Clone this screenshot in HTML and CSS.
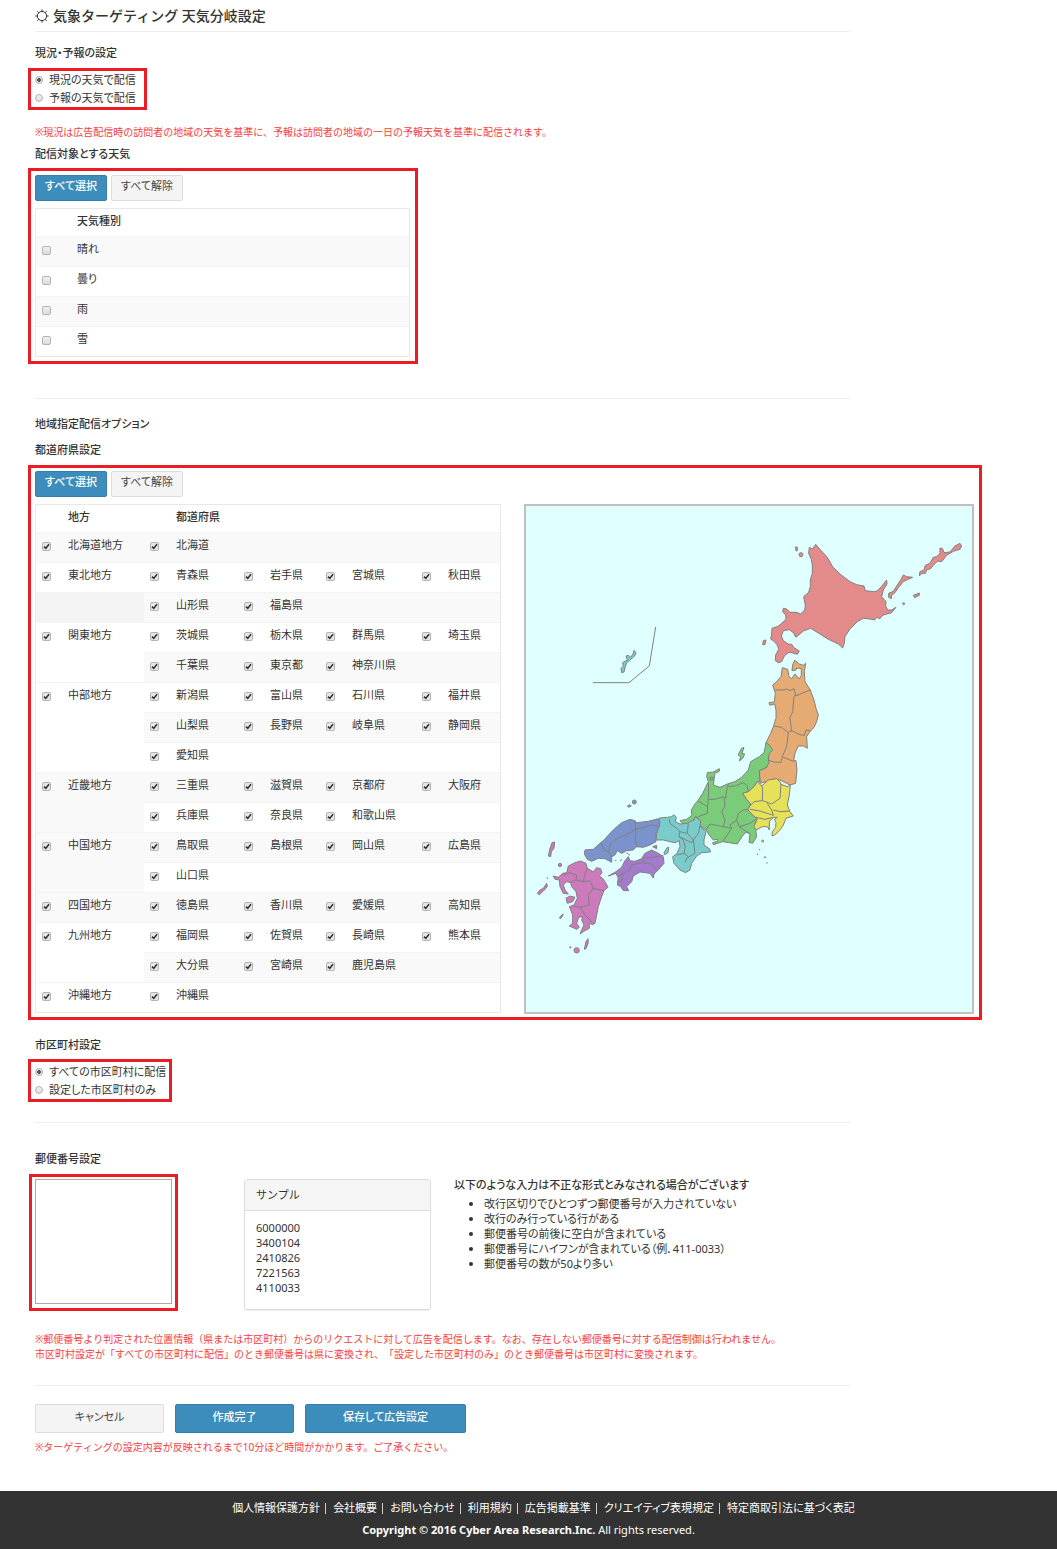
FILE: index.html
```html
<!DOCTYPE html>
<html lang="ja">
<head>
<meta charset="utf-8">
<title>気象ターゲティング 天気分岐設定</title>
<link rel="stylesheet" href="styles.css">
</head>
<body>
<main class="page">
<h1 class="title"><svg class="title-icon" viewBox="0 0 14 14" aria-hidden="true"><circle cx="7" cy="7" r="4.6"/><path d="M7 .4v2M7 11.6v2M.4 7h2M11.6 7h2M2.3 2.3l1.4 1.4M10.3 10.3l1.4 1.4M2.3 11.7l1.4-1.4M10.3 3.7l1.4-1.4"/></svg>気象ターゲティング 天気分岐設定</h1>

<h2>現況・予報の設定</h2>
<div class="frame frame-mode">
<div class="choice"><input type="radio" name="mode" id="m1" checked><label for="m1">現況の天気で配信</label></div>
<div class="choice"><input type="radio" name="mode" id="m2"><label for="m2">予報の天気で配信</label></div>
</div>
<p class="note note-mode">※現況は広告配信時の訪問者の地域の天気を基準に、予報は訪問者の地域の一日の予報天気を基準に配信されます。</p>

<h2>配信対象とする天気</h2>
<div class="frame frame-weather">
<div class="tools"><button class="btn primary" type="button">すべて選択</button><button class="btn" type="button">すべて解除</button></div>
<table class="grid">
<colgroup><col class="w33"><col></colgroup>
<thead><tr><th></th><th>天気種別</th></tr></thead>
<tbody>
<tr><td><input type="checkbox" id="w1"></td><td><label for="w1">晴れ</label></td></tr>
<tr><td><input type="checkbox" id="w2"></td><td><label for="w2">曇り</label></td></tr>
<tr><td><input type="checkbox" id="w3"></td><td><label for="w3">雨</label></td></tr>
<tr><td><input type="checkbox" id="w4"></td><td><label for="w4">雪</label></td></tr>
</tbody>
</table>
</div>

<hr class="after-weather">
<h2>地域指定配信オプション</h2>
<h2 class="sub">都道府県設定</h2>
<div class="frame frame-area">
<div class="tools"><button class="btn primary" type="button">すべて選択</button><button class="btn" type="button">すべて解除</button></div>
<div class="area">
<table class="grid regions">
<colgroup><col class="w24"><col class="w84"><col class="w24"><col class="w70"><col class="w24"><col class="w58"><col class="w24"><col class="w72"><col class="w24"><col></colgroup>
<thead><tr><th></th><th>地方</th><th></th><th colspan="7">都道府県</th></tr></thead>
<tbody>
<tr><td><input type="checkbox" id="r1" checked></td><td><label for="r1">北海道地方</label></td><td><input type="checkbox" id="p1" checked></td><td colspan="7"><label for="p1">北海道</label></td></tr>
<tr><td><input type="checkbox" id="r2" checked></td><td><label for="r2">東北地方</label></td><td><input type="checkbox" id="p2" checked></td><td><label for="p2">青森県</label></td><td><input type="checkbox" id="p3" checked></td><td><label for="p3">岩手県</label></td><td><input type="checkbox" id="p4" checked></td><td><label for="p4">宮城県</label></td><td><input type="checkbox" id="p5" checked></td><td><label for="p5">秋田県</label></td></tr>
<tr><td colspan="2" class="empty"></td><td><input type="checkbox" id="p6" checked></td><td><label for="p6">山形県</label></td><td><input type="checkbox" id="p7" checked></td><td colspan="5"><label for="p7">福島県</label></td></tr>
<tr><td rowspan="2"><input type="checkbox" id="r3" checked></td><td rowspan="2"><label for="r3">関東地方</label></td><td><input type="checkbox" id="p8" checked></td><td><label for="p8">茨城県</label></td><td><input type="checkbox" id="p9" checked></td><td><label for="p9">栃木県</label></td><td><input type="checkbox" id="p10" checked></td><td><label for="p10">群馬県</label></td><td><input type="checkbox" id="p11" checked></td><td><label for="p11">埼玉県</label></td></tr>
<tr><td><input type="checkbox" id="p12" checked></td><td><label for="p12">千葉県</label></td><td><input type="checkbox" id="p13" checked></td><td><label for="p13">東京都</label></td><td><input type="checkbox" id="p14" checked></td><td colspan="3"><label for="p14">神奈川県</label></td></tr>
<tr><td rowspan="3"><input type="checkbox" id="r4" checked></td><td rowspan="3"><label for="r4">中部地方</label></td><td><input type="checkbox" id="p15" checked></td><td><label for="p15">新潟県</label></td><td><input type="checkbox" id="p16" checked></td><td><label for="p16">富山県</label></td><td><input type="checkbox" id="p17" checked></td><td><label for="p17">石川県</label></td><td><input type="checkbox" id="p18" checked></td><td><label for="p18">福井県</label></td></tr>
<tr><td><input type="checkbox" id="p19" checked></td><td><label for="p19">山梨県</label></td><td><input type="checkbox" id="p20" checked></td><td><label for="p20">長野県</label></td><td><input type="checkbox" id="p21" checked></td><td><label for="p21">岐阜県</label></td><td><input type="checkbox" id="p22" checked></td><td><label for="p22">静岡県</label></td></tr>
<tr><td><input type="checkbox" id="p23" checked></td><td colspan="7"><label for="p23">愛知県</label></td></tr>
<tr><td rowspan="2"><input type="checkbox" id="r5" checked></td><td rowspan="2"><label for="r5">近畿地方</label></td><td><input type="checkbox" id="p24" checked></td><td><label for="p24">三重県</label></td><td><input type="checkbox" id="p25" checked></td><td><label for="p25">滋賀県</label></td><td><input type="checkbox" id="p26" checked></td><td><label for="p26">京都府</label></td><td><input type="checkbox" id="p27" checked></td><td><label for="p27">大阪府</label></td></tr>
<tr><td><input type="checkbox" id="p28" checked></td><td><label for="p28">兵庫県</label></td><td><input type="checkbox" id="p29" checked></td><td><label for="p29">奈良県</label></td><td><input type="checkbox" id="p30" checked></td><td colspan="3"><label for="p30">和歌山県</label></td></tr>
<tr><td rowspan="2"><input type="checkbox" id="r6" checked></td><td rowspan="2"><label for="r6">中国地方</label></td><td><input type="checkbox" id="p31" checked></td><td><label for="p31">鳥取県</label></td><td><input type="checkbox" id="p32" checked></td><td><label for="p32">島根県</label></td><td><input type="checkbox" id="p33" checked></td><td><label for="p33">岡山県</label></td><td><input type="checkbox" id="p34" checked></td><td><label for="p34">広島県</label></td></tr>
<tr><td><input type="checkbox" id="p35" checked></td><td colspan="7"><label for="p35">山口県</label></td></tr>
<tr><td><input type="checkbox" id="r7" checked></td><td><label for="r7">四国地方</label></td><td><input type="checkbox" id="p36" checked></td><td><label for="p36">徳島県</label></td><td><input type="checkbox" id="p37" checked></td><td><label for="p37">香川県</label></td><td><input type="checkbox" id="p38" checked></td><td><label for="p38">愛媛県</label></td><td><input type="checkbox" id="p39" checked></td><td><label for="p39">高知県</label></td></tr>
<tr><td rowspan="2"><input type="checkbox" id="r8" checked></td><td rowspan="2"><label for="r8">九州地方</label></td><td><input type="checkbox" id="p40" checked></td><td><label for="p40">福岡県</label></td><td><input type="checkbox" id="p41" checked></td><td><label for="p41">佐賀県</label></td><td><input type="checkbox" id="p42" checked></td><td><label for="p42">長崎県</label></td><td><input type="checkbox" id="p43" checked></td><td><label for="p43">熊本県</label></td></tr>
<tr><td><input type="checkbox" id="p44" checked></td><td><label for="p44">大分県</label></td><td><input type="checkbox" id="p45" checked></td><td><label for="p45">宮崎県</label></td><td><input type="checkbox" id="p46" checked></td><td colspan="3"><label for="p46">鹿児島県</label></td></tr>
<tr><td><input type="checkbox" id="r9" checked></td><td><label for="r9">沖縄地方</label></td><td><input type="checkbox" id="p47" checked></td><td colspan="7"><label for="p47">沖縄県</label></td></tr>
</tbody>
</table>
<svg class="map" viewBox="526 506 446 506" role="img" aria-label="日本地図">
<g transform="translate(740 530) scale(.3333)">
<g class="hokkaido">
<path d="M208 52L218 57 227 43 240 58 262 82 278 110 300 132 330 155 350 164 372 168 376 182 400 185 412 183 424 170 440 150 441 162 430 180 425 200 438 215 437 228 443 240 455 240 468 232 455 248 440 252 428 256 420 266 410 262 404 270 390 267 370 265 352 275 330 297 315 320 313 340 308 354 295 342 265 328 240 312 212 295 190 303 168 322 160 308 148 299 130 302 124 318 130 332 145 342 155 343 162 353 178 363 172 373 155 368 145 368 133 378 125 395 115 398 106 392 107 375 116 358 112 345 102 334 92 327 95 312 96 295 112 290 122 283 138 268 137 255 128 245 130 235 140 237 150 247 168 247 182 252 194 240 196 225 191 200 206 187 211 170 211 150 217 130 217 105 214 88 206 70Z"/>
<path d="M167 50l5 2 0 10-4 1zM70 332l8-2-3 14-7 0zM446 190L460 184 470 168 482 150 490 135 500 140 518 142 500 150 490 155 476 172 465 188 455 196 454 206 446 202ZM538 138L540 125 552 120 556 106 570 100 580 82 590 80 600 70 600 54 608 56 612 68 630 66 645 48 660 40 665 48 660 58 640 64 620 76 606 94 592 94 580 106 572 116 560 120 556 130 546 130ZM520 196L538 189 538 196 524 203Z"/>
<circle cx="183" cy="74" r="6"/><circle cx="491" cy="221" r="3"/>
</g>
<g class="tohoku">
<path d="M127 413L143 418 147 440 155 446 165 432 178 447 184 436 184 416 170 414 168 420 156 422 158 405 164 391 178 402 190 406 197 400 193 425 195 455 211 480 222 510 228 535 235 555 230 575 222 592 210 605 200 620 202 655 190 648 175 648 165 670 161 692 168 692 171 720 167 760 150 765 120 750 100 748 60 760 58 722 80 712 85 690 84 655 78 638 92 610 100 590 108 565 108 540 104 522 90 526 87 518 103 516 106 490 98 465 110 455 123 440Z"/>
<path class="line" d="M106 480L130 480 140 477 150 482 162 476 168 498 190 488 211 480M168 492L162 500 158 545 149 565 153 585 154 605M100 588L125 592 145 608 154 602 180 614 193 616 198 600 210 602M145 608L140 650 127 680 123 697 100 696 86 690M127 680L150 690 161 694"/>
</g>
</g>
<g transform="translate(680 730) scale(.3333)">
<g class="chubu">
<path d="M258 38L268 45 278 60 268 70 265 90 267 97 260 112 238 122 240 155 232 155 222 170 205 185 188 190 200 208 212 222 204 240 218 255 232 266 226 280 228 305 230 320 218 340 207 337 210 312 198 306 186 320 172 342 128 335 118 338 100 344 98 338 113 334 113 328 100 330 90 318 78 300 60 286 55 264 46 260 40 272 25 283 8 280 0 272 20 268 36 256 34 240 45 222 55 210 68 190 78 170 85 155 80 140 82 128 100 126 118 116 118 124 105 130 102 150 100 165 120 172 142 162 165 155 185 142 205 120 212 95 238 80 252 68 256 50ZM174 75L185 55 192 52 186 70 194 72 188 85 178 93 182 80Z"/>
<path class="line" d="M85 160L86 180 83 230 55 214M83 230L82 250 55 260M85 208L105 208 130 200 137 205 142 170 145 162M145 170L165 168 190 158 202 168 205 185M132 205L135 230 125 245 135 270 130 290 90 282 78 300M130 290L155 295 150 285 170 270 175 250 190 240 205 238M170 270L178 290 210 280 228 268M155 295L128 335M178 290L210 312M90 142l10 0 0 8-10 0z"/>
</g>
<g class="kanto">
<path d="M188 190L205 185 222 170 232 155 245 168 265 150 290 146 300 155 303 163 322 170 331 166 328 195 322 225 330 245 340 258 318 265 310 285 300 300 284 315 276 318 277 305 287 292 288 278 283 268 292 262 280 262 268 275 268 300 262 290 248 290 228 300 222 290 232 266 218 255 204 240 212 222 200 208Z"/>
<path class="line" d="M245 165L248 180 247 212 222 215 210 228M247 212L275 222 300 205 303 163M210 238L240 243 280 256 275 240 262 220M280 240L300 245 330 243M228 262L255 268 282 262"/>
<circle cx="248" cy="333" r="3"/><circle cx="239" cy="359" r="1"/><circle cx="233" cy="372" r="1"/><circle cx="255" cy="382" r="2"/><circle cx="261" cy="399" r="1"/>
</g>
</g>
<g transform="translate(530 790) scale(.3333)">
<g class="kinki">
<path d="M388 84L412 82 425 80 432 74 439 82 436 95 450 102 470 100 492 90 496 80 512 92 510 108 528 125 522 150 522 165 540 178 541 186 515 188 500 198 485 220 480 240 467 248 450 240 432 220 428 200 440 192 450 170 448 152 436 158 420 155 400 150 378 150 382 120ZM402 188L412 172 416 172 414 188 404 194Z"/>
<path class="line" d="M418 88L420 100 440 115 450 125 447 140 460 150 466 170 462 190 440 195M475 100L472 130 490 150 485 158 468 150 447 140M510 108L505 130 490 150 495 190 470 205 465 217M450 125L470 130M462 190L475 200"/>
</g>
<g class="chugoku">
<path d="M165 180L190 178 210 160 222 150 240 130 255 115 275 98 300 88 315 92 320 98 355 94 385 86 390 96 388 110 378 130 378 155 360 165 340 172 320 170 310 180 290 182 275 190 262 182 255 195 245 200 245 217 225 206 205 205 185 214 172 208 163 192ZM292 48l8-4 4 4-8 4z"/>
<circle cx="313" cy="36" r="6"/>
<path class="line" d="M214 160L222 180 235 186 240 165 255 150 275 140 305 125 315 118 345 112 365 104 388 110M315 92L318 125 316 150 322 172M235 186L245 200M290 188l10 8M255 212l4 0M270 212l6-3"/>
</g>
<g class="shikoku">
<path d="M258 245L275 232 285 212 295 200 300 212 315 214 335 206 345 190 365 180 385 190 400 200 402 220 385 240 372 252 370 264 360 250 330 246 310 258 305 275 290 290 296 302 280 302 272 290 262 285 265 262 260 255 258 250 235 258 250 250ZM368 170l12-4 0 10z"/>
<path class="line" d="M262 262L280 250 300 240 305 225 335 218 365 222 380 240M335 206L345 218M340 203L365 203 400 196M264 274L275 275 278 250"/>
</g>
<g class="kyushu">
<path d="M115 228L135 218 152 213 168 220 172 235 190 245 200 233 212 236 216 248 208 258 218 265 228 280 234 292 222 302 215 320 205 350 200 375 195 400 188 404 178 400 178 415 160 425 150 432 155 420 162 405 155 390 158 380 146 382 140 400 148 412 140 418 118 408 128 400 128 375 118 350 132 345 142 325 138 305 125 290 122 278 110 275 100 285 105 300 115 312 100 310 90 290 88 270 75 268 70 258 85 262 98 250 110 248ZM108 325L120 318 135 322 128 335 112 340ZM55 198L60 175 66 158 74 156 72 175 64 185 62 200ZM22 310L30 300 40 295 50 280 52 290 40 303 28 314zM88 384l10-12 2 2-8 12zM163 478L168 455 174 446 175 458 168 476z"/>
<circle cx="90" cy="225" r="5"/><circle cx="140" cy="481" r="8"/><circle cx="121" cy="472" r="2"/><circle cx="52" cy="264" r="1"/>
<path class="line" d="M98 256L120 248 140 255 138 270 122 278M138 270L160 275 165 250 172 235M160 275L180 272 190 295 222 302M190 295L175 315 178 345 150 352 130 348M150 352L165 375 190 400"/>
</g>
</g>
<g transform="translate(580 610) scale(.3333)">
<path class="line" d="M39 218H147L208 168 227 51"/>
<path class="okinawa" d="M125 188L123 175 130 170 128 158 142 150 138 138 146 136 152 142 160 130 162 121 168 128 164 138 150 150 140 158 136 170 132 186Z"/>
</g>
</svg>
</div>
</div>

<h2 class="city-title">市区町村設定</h2>
<div class="frame frame-city">
<div class="choice"><input type="radio" name="city" id="c1" checked><label for="c1">すべての市区町村に配信</label></div>
<div class="choice"><input type="radio" name="city" id="c2"><label for="c2">設定した市区町村のみ</label></div>
</div>

<hr class="after-city">
<h2><label for="zip">郵便番号設定</label></h2>
<div class="postal">
<div class="frame frame-zip"><textarea id="zip"></textarea></div>
<section class="panel">
<h3>サンプル</h3>
<p>6000000<br>3400104<br>2410826<br>7221563<br>4110033</p>
</section>
<section class="rules">
<h3>以下のような入力は不正な形式とみなされる場合がございます</h3>
<ul>
<li>改行区切りでひとつずつ郵便番号が入力されていない</li>
<li>改行のみ行っている行がある</li>
<li>郵便番号の前後に空白が含まれている</li>
<li>郵便番号にハイフンが含まれている（例．411-0033）</li>
<li>郵便番号の数が50より多い</li>
</ul>
</section>
</div>
<p class="note note-zip">※郵便番号より判定された位置情報（県または市区町村）からのリクエストに対して広告を配信します。なお、存在しない郵便番号に対する配信制御は行われません。<br>市区町村設定が「すべての市区町村に配信」のとき郵便番号は県に変換され、「設定した市区町村のみ」のとき郵便番号は市区町村に変換されます。</p>

<hr class="after-zip">
<div class="actions"><button class="btn cancel" type="button">キャンセル</button><button class="btn primary done" type="button">作成完了</button><button class="btn primary save" type="submit">保存して広告設定</button></div>
<p class="note note-save">※ターゲティングの設定内容が反映されるまで10分ほど時間がかかります。ご了承ください。</p>
</main>

<footer class="footer">
<ul>
<li><a href="#">個人情報保護方針</a></li>
<li><a href="#">会社概要</a></li>
<li><a href="#">お問い合わせ</a></li>
<li><a href="#">利用規約</a></li>
<li><a href="#">広告掲載基準</a></li>
<li><a href="#">クリエイティブ表現規定</a></li>
<li><a href="#">特定商取引法に基づく表記</a></li>
</ul>
<p><strong>Copyright © 2016 Cyber Area Research.Inc.</strong> All rights reserved.</p>
</footer>
</body>
</html>
```
FILE: styles.css
```css
* {
  box-sizing: border-box;
}

body {
  margin: 0;
  background: #fff;
  color: #333;
  font-family: "Noto Sans", "Noto Sans CJK JP", sans-serif;
  font-size: 11px;
  line-height: 16px;
  font-feature-settings: "palt";
}

h1, h2, h3, p, ul {
  margin: 0;
}

.page {
  padding: 0 75px 0 28px;
}

.title {
  display: flex;
  align-items: center;
  gap: 4px;
  height: 32px;
  max-width: 815px;
  margin: 0 0 13px 7px;
  border-bottom: 1px solid #eee;
  font-size: 14px;
  font-weight: 500;
  font-feature-settings: normal;
}

.title-icon {
  width: 14px;
  height: 14px;
  fill: none;
  stroke: #333;
}

h2 {
  margin-left: 7px;
  font-size: 11px;
  font-weight: 500;
  line-height: 16px;
}

h2.sub {
  margin-top: 10px;
}

hr {
  max-width: 815px;
  height: 1px;
  margin: 0 0 0 7px;
  border: 0;
  background: #eee;
}

.after-weather {
  margin-top: 34px;
  margin-bottom: 17px;
}

.after-city {
  margin-top: 20px;
  margin-bottom: 28px;
}

.after-zip {
  margin-top: 23px;
}

.frame {
  border: 3px solid #ed1c24;
  padding: 4px;
}

.frame-mode {
  width: 119px;
  margin-top: 7px;
  padding: 0 4px;
}

.frame-weather {
  width: 390px;
  margin-top: 6px;
  padding-right: 5px;
}

.frame-area {
  margin-top: 7px;
  padding: 3px 5px 3px 4px;
}

.frame-city {
  width: 144px;
  margin-top: 6px;
  padding: 1px 4px 0;
}

.choice {
  display: flex;
  align-items: center;
  gap: 6px;
  height: 18px;
  white-space: nowrap;
}

input {
  appearance: none;
  flex: none;
  display: block;
  width: 9px;
  height: 9px;
  margin: 0;
  border: 1px solid #b4b4b4;
  border-radius: 2px;
  background: linear-gradient(#f0f0f0, #dcdcdc);
}

input[type="radio"] {
  width: 8px;
  height: 8px;
  border-radius: 50%;
}

input[type="radio"]:checked {
  background: radial-gradient(circle, #555 0 2px, #e4e4e4 2px);
}

input[type="checkbox"]:checked {
  background: #e6e6e6 url("data:image/svg+xml,%3Csvg xmlns='http://www.w3.org/2000/svg' viewBox='0 0 7 7'%3E%3Cpath d='M1 3.6 2.8 5.4 6 1.2' fill='none' stroke='%23333' stroke-width='1.6'/%3E%3C/svg%3E") center / 7px 7px no-repeat;
}

.note {
  margin-left: 7px;
  color: #ff3b3b;
  font-size: 10px;
  line-height: 15px;
  font-feature-settings: normal;
  text-spacing-trim: space-all;
}

.note-mode {
  margin-top: 15px;
  margin-bottom: 6px;
}

.note-zip {
  margin-top: 21px;
}

.note-save {
  margin-top: 7px;
}

.tools {
  display: flex;
  gap: 4px;
  margin-bottom: 7px;
}

.btn {
  width: 72px;
  height: 26px;
  padding: 0 0 4px;
  border: 1px solid #ddd;
  border-radius: 2px;
  background: #f4f4f4;
  color: #444;
  font: inherit;
  font-feature-settings: "palt";
  white-space: nowrap;
}

.btn.primary {
  border-color: #367fa9;
  background: #3c8dbc;
  color: #fff;
  font-weight: 500;
}

.grid {
  width: 100%;
  table-layout: fixed;
  border: 1px solid #e8e8e8;
  border-collapse: separate;
  border-spacing: 0;
}

.grid th {
  height: 27px;
  padding: 4px 8px;
  font-weight: 500;
  text-align: left;
  vertical-align: top;
}

.grid td {
  height: 30px;
  padding: 4px 0 0 8px;
  border-top: 1px solid #f4f4f4;
  vertical-align: top;
  white-space: nowrap;
}

.grid td:has(input) {
  padding: 9px 0 0 6px;
}

.grid tbody tr:nth-child(odd) {
  background: #f9f9f9;
}

.grid .empty {
  background: #f4f4f4;
}

.w24 { width: 24px; }
.w33 { width: 33px; }
.w58 { width: 58px; }
.w70 { width: 70px; }
.w72 { width: 72px; }
.w84 { width: 84px; }

.area {
  display: flex;
  align-items: flex-start;
  gap: 23px;
}

.regions {
  flex: none;
  width: 466px;
}

.map {
  flex: 1;
  min-width: 0;
  max-width: 450px;
  border: 2px solid #c0c0c0;
  background: #e0ffff;
  stroke: #808080;
  stroke-width: 3;
  stroke-linejoin: round;
}

.map .line { fill: none; }
.hokkaido { fill: #e38a8a; }
.tohoku { fill: #e5ab73; }
.kanto { fill: #e5e25a; }
.chubu { fill: #7acc7a; }
.kinki, .okinawa { fill: #7acccc; }
.chugoku { fill: #7a93cc; }
.shikoku { fill: #a37acc; }
.kyushu { fill: #cc7abb; }

.city-title {
  margin-top: 17px;
}

.postal {
  display: flex;
  align-items: flex-start;
  margin-top: 7px;
}

.frame-zip {
  width: 149px;
  margin-left: 1px;
  padding: 2px 3px 4px;
}

textarea {
  display: block;
  width: 100%;
  height: 125px;
  border: 1px solid #a9a9a9;
  background: #fff;
  resize: none;
}

.panel {
  width: 187px;
  margin: 5px 23px 0 66px;
  border: 1px solid #ddd;
  border-radius: 3px;
  box-shadow: 0 1px 1px #eee;
}

.panel h3 {
  padding: 7px 11px 8px;
  border-bottom: 1px solid #ddd;
  background: #f5f5f5;
  font-size: 11px;
  font-weight: 400;
  line-height: 15px;
  font-feature-settings: normal;
}

.panel p {
  padding: 9px 11px 14px;
  line-height: 15px;
}

.rules {
  padding-top: 3px;
}

.rules h3 {
  font-size: 11px;
  font-weight: 500;
}

.rules ul {
  margin-top: 3px;
  padding-left: 30px;
  line-height: 15px;
}

.actions {
  display: flex;
  gap: 11px;
  margin: 18px 0 0 7px;
}

.actions .btn {
  height: 29px;
}

.actions .cancel { width: 129px; }
.actions .done { width: 119px; }
.actions .save { width: 161px; }

.footer {
  margin-top: 36px;
  padding: 9px 0 11px;
  background: #333;
  color: #fff;
  text-align: center;
}

.footer ul {
  display: flex;
  justify-content: center;
  padding-left: 30px;
  list-style: none;
}

.footer li {
  display: flex;
  align-items: center;
}

.footer li + li::before {
  content: "";
  width: 1px;
  height: 11px;
  margin: 0 7px 0 5px;
  background: #ccc;
}

.footer a {
  color: #fff;
  text-decoration: none;
}

.footer p {
  margin-top: 6px;
}
```
